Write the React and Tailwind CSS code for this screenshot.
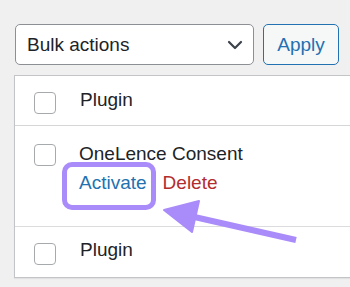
import React from "react";

function Box() {
  return <div className="w-[22px] h-[22px] shrink-0 rounded-[4px] border border-[#a7aaad] bg-white" />;
}

export default function App() {
  return (
    <div
      className="relative w-[350px] h-[287px] overflow-hidden bg-[#f0f0f1] text-[19px] leading-[24px] text-[#1d2327]"
      style={{ fontFamily: '"Liberation Sans", Arial, sans-serif' }}
    >
      <div className="flex pt-[24px] pl-[15px] gap-[9px]">
        <div className="w-[239px] h-[41px] rounded-[5px] border border-[#8c8f94] bg-white flex items-center justify-between pl-[11px] pr-[10px]">
          <span>Bulk actions</span>
          <svg width="16" height="10" viewBox="0 0 16 10" fill="none">
            <path d="M2 2l6 6 6-6" stroke="#3c434a" strokeWidth="2.2" strokeLinecap="round" strokeLinejoin="round" />
          </svg>
        </div>
        <div className="w-[76px] h-[41px] rounded-[5px] border border-[#2271b1] bg-[#f6f7f7] text-[#2271b1] flex items-center justify-center">
          Apply
        </div>
      </div>

      <div className="mt-[10px] ml-[14px] w-[360px] bg-white border border-[#c3c4c7] shadow-[0_1px_1px_rgba(0,0,0,0.06)]">
        <div className="h-[50px] flex items-start pl-[19px] border-b border-[#d5d6d8]">
          <div className="mt-[16px]"><Box /></div>
          <div className="ml-[24px] mt-[12px]">Plugin</div>
        </div>
        <div className="h-[101px] flex items-start pl-[19px] border-b border-[#dcdcde]">
          <div className="mt-[18px]"><Box /></div>
          <div className="ml-[23px] mt-[16px]">
            <div>OneLence Consent</div>
            <div className="mt-[5px] flex gap-[16px]">
              <span className="text-[#2271b1]">Activate</span>
              <span className="text-[#b32d2e]">Delete</span>
            </div>
          </div>
        </div>
        <div className="h-[50px] flex items-start pl-[19px]">
          <div className="mt-[16px]"><Box /></div>
          <div className="ml-[24px] mt-[11px]">Plugin</div>
        </div>
      </div>

      <div className="absolute left-[62px] top-[162px] w-[94px] h-[48px] rounded-[10px] border-[5px] border-[#a98bfa]" />

      <svg className="absolute left-0 top-0" width="350" height="287" viewBox="0 0 350 287" fill="none">
        <line x1="190" y1="216" x2="296" y2="240" stroke="#a98bfa" strokeWidth="6" />
        <polygon points="164,210 199,201 192,232" fill="#a98bfa" stroke="#a98bfa" strokeWidth="2" strokeLinejoin="round" />
      </svg>
    </div>
  );
}
